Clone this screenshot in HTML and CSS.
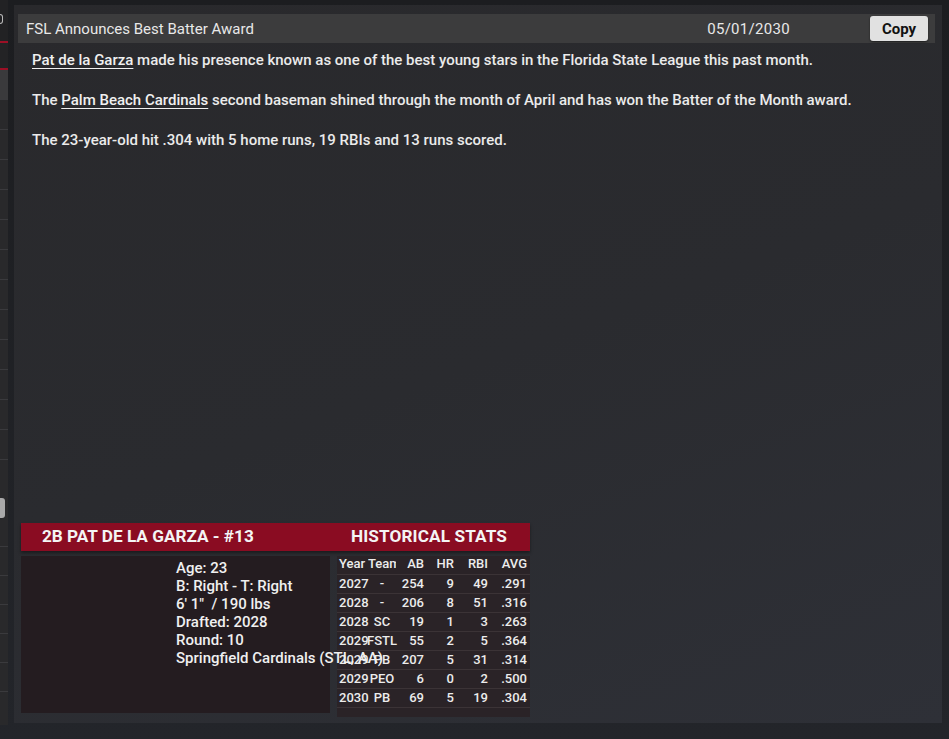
FILE: index.html
```html
<!DOCTYPE html>
<html>
<head>
<meta charset="utf-8">
<link rel="stylesheet" href="styles.css">
</head>
<body>
<div class="app">
  <aside class="side">
    <div class="side-top"><div class="side-glyph"></div></div>
    <div class="side-red"></div>
    <div class="side-sel"></div>
    <div class="side-list">
      <div class="srow"></div><div class="srow"></div><div class="srow"></div><div class="srow"></div>
      <div class="srow"></div><div class="srow"></div><div class="srow"></div><div class="srow"></div>
      <div class="srow"></div><div class="srow"></div><div class="srow"></div><div class="srow"></div>
      <div class="srow"></div>
    </div>
    <div class="side-thumb"></div>
    <div class="side-list2">
      <div class="srow"></div><div class="srow"></div><div class="srow"></div><div class="srow"></div><div class="srow"></div><div class="srow"></div>
    </div>
  </aside>
  <main class="panel">
    <div class="titlebar">
      <span class="title">FSL Announces Best Batter Award</span>
      <span class="date">05/01/2030</span>
      <button class="copy">Copy</button>
    </div>
    <div class="story">
      <p><a class="link">Pat de la Garza</a> made his presence known as one of the best young stars in the Florida State League this past month.</p>
      <p>The <a class="link">Palm Beach Cardinals</a> second baseman shined through the month of April and has won the Batter of the Month award.</p>
      <p>The 23-year-old hit .304 with 5 home runs, 19 RBIs and 13 runs scored.</p>
    </div>
    <div class="card">
      <div class="card-head">
        <span class="name">2B PAT DE LA GARZA - #13</span>
        <span class="hist">HISTORICAL STATS</span>
      </div>
      <div class="card-body">
        <div class="bio">
          <div class="photo"></div>
          <div class="info">
            <div>Age: 23</div>
            <div>B: Right - T: Right</div>
            <div>6' 1"&nbsp; / 190 lbs</div>
            <div>Drafted: 2028</div>
            <div>Round: 10</div>
            <div class="nowrap">Springfield Cardinals (STL, AA)</div>
          </div>
        </div>
        <table class="stats">
          <thead>
            <tr><th class="c-year">Year</th><th class="c-team"><span class="clip">Team</span></th><th>AB</th><th>HR</th><th>RBI</th><th>AVG</th></tr>
          </thead>
          <tbody>
            <tr><td class="c-year">2027</td><td class="c-team">-</td><td>254</td><td>9</td><td>49</td><td>.291</td></tr>
            <tr><td class="c-year">2028</td><td class="c-team">-</td><td>206</td><td>8</td><td>51</td><td>.316</td></tr>
            <tr><td class="c-year">2028</td><td class="c-team">SC</td><td>19</td><td>1</td><td>3</td><td>.263</td></tr>
            <tr><td class="c-year">2029</td><td class="c-team">FSTL</td><td>55</td><td>2</td><td>5</td><td>.364</td></tr>
            <tr><td class="c-year">2029</td><td class="c-team">PB</td><td>207</td><td>5</td><td>31</td><td>.314</td></tr>
            <tr><td class="c-year">2029</td><td class="c-team">PEO</td><td>6</td><td>0</td><td>2</td><td>.500</td></tr>
            <tr><td class="c-year">2030</td><td class="c-team">PB</td><td>69</td><td>5</td><td>19</td><td>.304</td></tr>
          </tbody>
        </table>
      </div>
    </div>
  </main>
</div>
</body>
</html>
```

FILE: styles.css
```css
* { box-sizing: border-box; }
html, body { margin: 0; padding: 0; }
body {
  width: 949px;
  height: 739px;
  overflow: hidden;
  background: linear-gradient(180deg, #1c1d20 0%, #23252a 100%);
  font-family: Roboto, "Liberation Sans", sans-serif;
  color: #ececec;
}
.app {
  display: flex;
  height: 739px;
}
.side {
  width: 8px;
  flex-shrink: 0;
  background: #29292b;
  display: flex;
  flex-direction: column;
  height: 725px;
}
.side-top { height: 41px; background: #222224; overflow: hidden; }
.side-glyph { width: 3px; height: 10px; margin-top: 14px; border: 1px solid #bbb; border-left: none; border-radius: 0 3px 3px 0; }
.side-red { height: 2px; background: #9b1026; }
.side-sel { height: 27px; background: #232325; border-bottom: 2px solid #9b1026; }
.side-list { display: flex; flex-direction: column; }
.side-list .srow:first-child { height: 30px; background: #3a3a3c; }
.srow { height: 30px; border-bottom: 1px solid #3a3a3d; }
.side-thumb {
  margin-top: 38px;
  width: 5px; height: 20px;
  background: #a9a9a9;
  border-radius: 0 3px 3px 0;
}
.side-list2 .srow { height: 29px; }
.panel {
  margin: 5px 0 16px 6px;
  width: 928px;
  height: 718px;
  background: linear-gradient(160deg, #29292c 0%, #2a2b2f 50%, #2e3037 100%);
  padding: 9px 7px 0 4px;
  display: flex;
  flex-direction: column;
}
.titlebar {
  height: 29px;
  background: #3c3c3d;
  display: flex;
  align-items: center;
  padding: 0 7px 0 8px;
  font-size: 15px;
  color: #e8e8e8;
}
.title { flex: 1; }
.date { margin-right: 80px; letter-spacing: 0.3px; }
.copy {
  width: 58px;
  height: 25px;
  border: none;
  border-radius: 3px;
  background: #e1e1e1;
  color: #111;
  font-family: Roboto, "Liberation Sans", sans-serif;
  font-weight: bold;
  font-size: 15px;
  padding: 0;
  box-shadow: 0 1px 2px rgba(0,0,0,.5);
}
.story {
  padding: 7px 14px 0 14px;
  height: 480px;
  font-size: 15px;
  font-weight: 500;
  line-height: 20px;
  color: #ebebeb;
}
.story p { margin: 0 0 20px 0; }
.link { color: #f0f0f0; text-decoration: underline; text-decoration-thickness: 1px; text-underline-offset: 3px; }
.card {
  margin-left: 3px;
  width: 509px;
}
.card-head {
  height: 28px;
  background: #8a0c22;
  display: flex;
  align-items: center;
  font-weight: bold;
  font-size: 17.2px;
  color: #f4f4f4;
  box-shadow: 0 2px 3px rgba(0,0,0,.4);
  padding-bottom: 3px;
}
.name { padding-left: 21px; width: 330px; flex-shrink: 0; }
.hist { letter-spacing: 0.1px; }
.card-body {
  display: flex;
  margin-top: 5px;
  align-items: flex-start;
}
.bio {
  width: 309px;
  height: 157px;
  flex-shrink: 0;
  background: #241c20;
  display: flex;
  position: relative;
  z-index: 2;
}
.photo { width: 155px; flex-shrink: 0; }
.info {
  font-size: 15px;
  font-weight: 500;
  line-height: 18px;
  padding-top: 3px;
  color: #f0f0f0;
}
.nowrap { white-space: nowrap; }
.stats {
  margin-left: 7px;
  border-collapse: collapse;
  background: #2a2327;
  font-size: 13px;
  font-weight: 500;
  color: #ececec;
  width: 193px;
  flex-shrink: 0;
  table-layout: fixed;
  position: relative;
  z-index: 1;
}
.stats th, .stats td {
  height: 19px;
  padding: 0 0 2px 0;
  text-align: right;
  font-weight: 500;
  border-bottom: 1px solid #3b3336;
}
.stats thead th { height: 17px; padding-bottom: 3px; }
.stats tbody::after { content: ""; display: block; height: 9px; }
.stats .c-year { text-align: left; padding-left: 2px; width: 30px; }
.stats .c-team { text-align: center; width: 30px; }
.stats th:nth-child(3), .stats td:nth-child(3) { width: 29px; padding-right: 2px; }
.stats th:nth-child(4), .stats td:nth-child(4) { width: 30px; padding-right: 2px; }
.stats th:nth-child(5), .stats td:nth-child(5) { width: 34px; padding-right: 2px; }
.stats th:nth-child(6), .stats td:nth-child(6) { width: 40px; padding-right: 3px; }
.clip { display: inline-block; width: 28px; overflow: hidden; white-space: nowrap; vertical-align: bottom; text-align: left; }
```
